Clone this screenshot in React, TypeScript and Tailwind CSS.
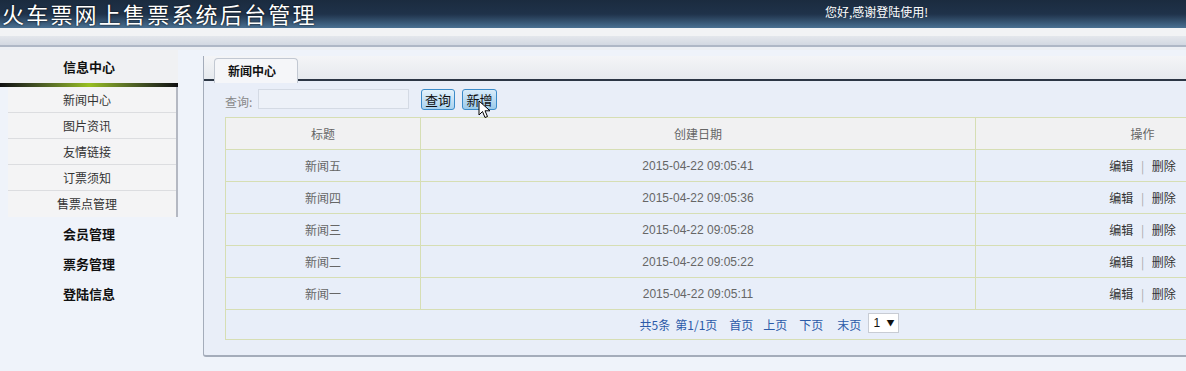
import React from "react";

const rows = [
  { t: "新闻五", d: "2015-04-22 09:05:41" },
  { t: "新闻四", d: "2015-04-22 09:05:36" },
  { t: "新闻三", d: "2015-04-22 09:05:28" },
  { t: "新闻二", d: "2015-04-22 09:05:22" },
  { t: "新闻一", d: "2015-04-22 09:05:11" },
];

const font = { fontFamily: '"Noto Sans CJK SC", "Liberation Sans", sans-serif' };

export default function App() {
  return (
    <div className="w-[1186px] h-[371px] overflow-hidden bg-[#eff3fa] text-[12px] text-[#333]" style={font}>
      {/* header */}
      <div className="h-[28px] flex items-start bg-gradient-to-b from-[#1b2b3f] via-[#1f324a] to-[#4a7193]">
        <div className="w-[825px] text-[22px] leading-[26px] text-white tracking-[2.2px] pl-[2px] [text-shadow:0_0_2px_#000]">
          火车票网上售票系统后台管理
        </div>
        <div className="text-[12px] text-white leading-none pt-[6px]">您好,感谢登陆使用!</div>
      </div>
      {/* sub bar */}
      <div className="h-[8px] bg-[#f2f3f5]" />
      <div className="h-[11px] bg-gradient-to-b from-[#e4e7ec] to-[#d2d8e2] border-b-2 border-[#aeb7c6]" />
      <div className="h-[3px] bg-[#eceff4]" />

      <div className="flex">
        {/* sidebar */}
        <div className="w-[178px] shrink-0">
          <div className="h-[33px] flex items-center justify-center font-bold text-[13px] text-[#111] bg-[#f0f1f3]">
            信息中心
          </div>
          <div className="h-[4px] bg-gradient-to-r from-[#111] via-[#98c020] to-[#111]" />
          <div className="ml-[8px] bg-[#f4f4f5] border-r-2 border-[#b4b8c2]">
            {["新闻中心", "图片资讯", "友情链接", "订票须知", "售票点管理"].map((s, i) => (
              <div
                key={s}
                className={`h-[26px] flex items-center justify-center pr-[10px] text-[12px] text-[#333] ${i < 4 ? "border-b border-[#dcdde0]" : ""}`}
              >
                {s}
              </div>
            ))}
          </div>
          <div className="pt-[2px]">
            {["会员管理", "票务管理", "登陆信息"].map((s) => (
              <div key={s} className="h-[30px] flex items-center justify-center font-bold text-[13px] text-[#111]">
                {s}
              </div>
            ))}
          </div>
        </div>

        {/* main panel */}
        <div className="ml-[25px] mt-[6px] flex-1 min-w-0 overflow-hidden">
          <div className="border-l border-b-2 border-[#a4acba] rounded-bl-[3px] bg-[#e9eef8] pb-[15px]">
            {/* tab row */}
            <div className="relative h-[25px] border-b-2 border-[#2c3644] bg-gradient-to-b from-[#f4f5f7] to-[#e6e9ee]">
              <div className="absolute left-[10px] top-[2px] w-[84px] h-[25px] bg-[#f5f6f9] border border-b-0 border-[#c2c8d2] rounded-t-[4px] flex items-center pl-[13px] font-bold text-[12px] text-[#111]">
                新闻中心
              </div>
            </div>
            <div className="pl-[21px]">
              {/* search row */}
              <div className="relative h-[36px] flex items-center">
                <span className="text-[12px] text-[#888] mt-[6px] w-[33px]">查询:</span>
                <div className="w-[151px] h-[20px] bg-[#edf1f8] border border-[#d4dae4]" />
                <button className="ml-[12px] w-[34px] h-[21px] rounded-[3px] border border-[#3b8bc9] bg-gradient-to-b from-[#e4f2fb] to-[#a9d2ee] text-[13px] text-[#111] leading-none">
                  查询
                </button>
                <button className="ml-[7px] w-[35px] h-[21px] rounded-[3px] border border-[#3b8bc9] bg-gradient-to-b from-[#d8ecfa] to-[#9ccaea] text-[13px] text-[#111] leading-none">
                  新增
                </button>
                <svg className="absolute left-[253px] top-[19px]" width="14" height="20" viewBox="0 0 14 20">
                  <path d="M1 1 L1 15 L4.5 11.5 L7 17.5 L9.5 16.5 L7 10.8 L12 10.8 Z" fill="#fff" stroke="#000" strokeWidth="1" strokeLinejoin="round" />
                </svg>
              </div>
              {/* table */}
              <table className="w-[1084px] border-collapse text-[12px] text-[#666] table-fixed">
                <colgroup>
                  <col className="w-[195px]" />
                  <col className="w-[555px]" />
                  <col className="w-[334px]" />
                </colgroup>
                <thead>
                  <tr className="h-[32px] bg-[#f1f1f2]">
                    <th className="font-normal border border-[#d6deb4]">标题</th>
                    <th className="font-normal border border-[#d6deb4]">创建日期</th>
                    <th className="font-normal border border-[#d6deb4]">操作</th>
                  </tr>
                </thead>
                <tbody>
                  {rows.map((r) => (
                    <tr key={r.t} className="h-[32px] bg-[#e8eef9]">
                      <td className="text-center border border-[#d6deb4]">{r.t}</td>
                      <td className="text-center border border-[#d6deb4]" style={{ fontFamily: '"Liberation Sans", Arial, sans-serif' }}>
                        {r.d}
                      </td>
                      <td className="text-center border border-[#d6deb4] text-[#333]">
                        编辑 <span className="text-[#aaa] mx-[5px]">|</span> 删除
                      </td>
                    </tr>
                  ))}
                  <tr className="h-[30px] bg-[#e8eef9]">
                    <td colSpan={3} className="border border-[#d6deb4]">
                      <div className="flex items-center justify-center text-[#2b5aa8] pl-[4px]">
                        <span>共5条</span>
                        <span className="ml-[5px]">第1/1页</span>
                        <span className="ml-[12px]">首页</span>
                        <span className="ml-[10px]">上页</span>
                        <span className="ml-[12px]">下页</span>
                        <span className="ml-[14px]">末页</span>
                        <div className="ml-[7px] w-[31px] h-[20px] bg-white border border-[#c8ccd4] flex items-center justify-between px-[4px] text-[#111] -mt-[4px]">
                          <span style={{ fontFamily: '"Liberation Sans", Arial, sans-serif' }}>1</span>
                          <span className="text-[8px]">▼</span>
                        </div>
                      </div>
                    </td>
                  </tr>
                </tbody>
              </table>
            </div>
          </div>
        </div>
      </div>
    </div>
  );
}
